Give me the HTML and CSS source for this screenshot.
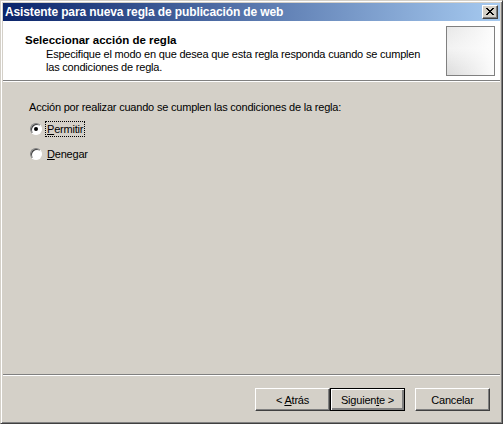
FILE: index.html
```html
<!DOCTYPE html>
<html lang="es">
<head>
    <meta charset="UTF-8">
    <title>Asistente para nueva regla de publicación de web</title>
    <link rel="stylesheet" href="styles.css">
</head>
<body>

<div class="window">
    <div class="titlebar">
        <span class="title">Asistente para nueva regla de publicación de web</span>
        <span class="close">
            <svg width="8" height="7" viewBox="0 0 8 7"><path d="M0 0h2v1h1v1h2V1h1V0h2v1H7v1H6v1H5v1h1v1h1v1h1v1H6V6H5V5H3v1H2v1H0V6h1V5h1V4h1V3H2V2H1V1H0z" fill="#000"/></svg>
        </span>
    </div>

    <div class="header">
        <div class="header-text">
            <h1>Seleccionar acción de regla</h1>
            <p>Especifique el modo en que desea que esta regla responda cuando se cumplen las condiciones de regla.</p>
        </div>
        <div class="header-image"></div>
    </div>

    <div class="content">
        <p class="question">Acción por realizar cuando se cumplen las condiciones de la regla:</p>
        <label class="option">
            <span class="radio checked"></span>
            <span class="focus"><u>P</u>ermitir</span>
        </label>
        <label class="option">
            <span class="radio"></span>
            <span class="text"><u>D</u>enegar</span>
        </label>
    </div>

    <div class="footer">
        <button class="btn">&lt; <u>A</u>trás</button>
        <button class="btn default">Siguien<u>t</u>e &gt;</button>
        <button class="btn cancel">Cancelar</button>
    </div>
</div>

</body>
</html>
```

FILE: styles.css
```css
html, body {
    margin: 0;
    padding: 0;
}
body {
    font-family: Tahoma, "Liberation Sans", Arial, sans-serif;
    font-size: 11px;
    letter-spacing: -0.2px;
    color: #000;
    background-color: #d4d0c8;
}
.window {
    width: 503px;
    height: 424px;
    box-sizing: border-box;
    background-color: #d4d0c8;
    border-top: 1px solid #d4d0c8;
    border-left: 1px solid #d4d0c8;
    border-right: 1px solid #404040;
    border-bottom: 1px solid #404040;
    box-shadow: inset 1px 1px 0 #fff, inset -1px -1px 0 #808080;
    padding: 2px;
    display: flex;
    flex-direction: column;
}
.titlebar {
    height: 18px;
    flex-shrink: 0;
    background: linear-gradient(to right, #0a246a, #a6caf0);
    display: flex;
    align-items: center;
    justify-content: space-between;
    padding: 0 2px;
}
.title {
    color: #fff;
    font-weight: bold;
    font-size: 12px;
    letter-spacing: -0.12px;
    white-space: nowrap;
}
.close {
    width: 16px;
    height: 14px;
    box-sizing: border-box;
    background-color: #d4d0c8;
    border-top: 1px solid #fff;
    border-left: 1px solid #fff;
    border-right: 1px solid #404040;
    border-bottom: 1px solid #404040;
    box-shadow: inset -1px -1px 0 #808080;
    display: flex;
    align-items: center;
    justify-content: center;
}
.close svg {
    margin: 0 1px 1px 0;
}
.header {
    height: 59px;
    flex-shrink: 0;
    background-color: #fff;
    border-bottom: 1px solid #808080;
    box-shadow: 0 1px 0 #fff;
    display: flex;
    justify-content: space-between;
    padding: 0 5px 0 22px;
}
.header-text h1 {
    font-size: 11.5px;
    font-weight: bold;
    letter-spacing: 0;
    margin: 12px 0 1px 0;
    line-height: 14px;
}
.header-text p {
    margin: 0 0 0 21px;
    line-height: 13px;
    width: 390px;
}
.header-image {
    width: 47px;
    height: 48px;
    margin-top: 5px;
    border: 1px solid #808080;
    background:
        linear-gradient(to right, rgba(255,255,255,0) 0, rgba(255,255,255,0.5) 60%, rgba(255,255,255,0.9) 100%),
        linear-gradient(to bottom, #e8e8e8 0, #f2f2f2 45%, #e6e6e6 75%, #dcdcdc 100%);
}
.content {
    flex: 1;
    padding: 20px 0 0 26px;
}
.question {
    margin: 0 0 6px 0;
    line-height: 13px;
}
.option {
    display: flex;
    align-items: center;
    height: 17px;
    margin-bottom: 8px;
}
.radio {
    width: 12px;
    height: 12px;
    box-sizing: border-box;
    border-radius: 50%;
    background-color: #fff;
    border: 1px solid;
    border-color: #808080 #fff #fff #808080;
    box-shadow: inset 1px 1px 0 #404040;
    margin: 0 4px 0 1px;
    position: relative;
}
.radio.checked::after {
    content: "";
    position: absolute;
    left: 3px;
    top: 3px;
    width: 4px;
    height: 4px;
    border-radius: 50%;
    background-color: #000;
}
.focus {
    outline: 1px dotted #000;
    padding: 1px 1px;
}
.text {
    padding: 1px 1px;
}
.footer {
    height: 47px;
    flex-shrink: 0;
    box-sizing: border-box;
    border-top: 1px solid #808080;
    box-shadow: inset 0 1px 0 #fff;
    display: flex;
    justify-content: flex-end;
    align-items: flex-start;
    padding: 13px 10px 0 0;
}
.btn {
    width: 75px;
    height: 23px;
    font-family: inherit;
    font-size: 11px;
    letter-spacing: -0.2px;
    color: #000;
    background-color: #d4d0c8;
    border-top: 1px solid #fff;
    border-left: 1px solid #fff;
    border-right: 1px solid #404040;
    border-bottom: 1px solid #404040;
    box-shadow: inset -1px -1px 0 #808080;
    padding: 0;
}
.btn.default {
    border: 1px solid #000;
    box-shadow: inset 1px 1px 0 #fff, inset -2px -2px 0 #808080;
}
.btn.cancel {
    margin-left: 10px;
}
```
